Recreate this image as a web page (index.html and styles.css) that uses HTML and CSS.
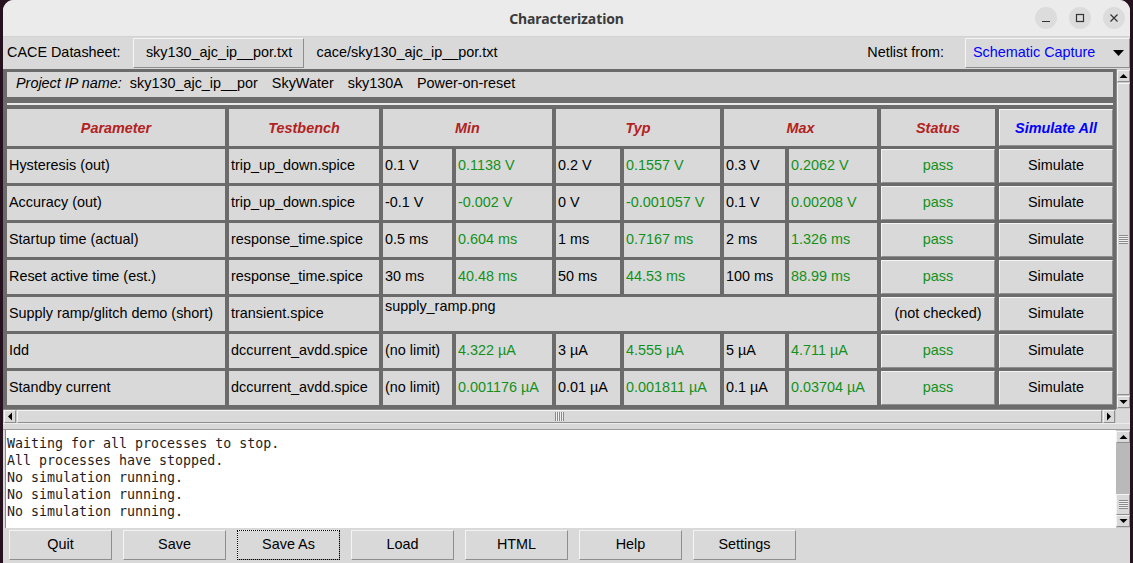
FILE: index.html
```html
<!DOCTYPE html>
<html>
<head>
<meta charset="utf-8">
<title>Characterization</title>
<link rel="stylesheet" href="styles.css">
</head>
<body>
<div class="window">
  <header class="titlebar">
    <div></div>
    <div class="title">Characterization</div>
    <div class="controls">
      <span class="wbtn"><svg width="22" height="22" viewBox="0 0 22 22"><line x1="7" y1="14.5" x2="15" y2="14.5" stroke="#333" stroke-width="1.2"/></svg></span>
      <span class="wbtn"><svg width="22" height="22" viewBox="0 0 22 22"><rect x="7.5" y="7.5" width="7" height="7" fill="none" stroke="#333" stroke-width="1.2"/></svg></span>
      <span class="wbtn"><svg width="22" height="22" viewBox="0 0 22 22"><path d="M7.5 7.5 L14.5 14.5 M14.5 7.5 L7.5 14.5" stroke="#333" stroke-width="1.2"/></svg></span>
    </div>
  </header>

  <div class="toolbar">
    <span class="lbl">CACE Datasheet:</span>
    <span class="tkbtn dsbtn">sky130_ajc_ip__por.txt</span>
    <span class="path">cace/sky130_ajc_ip__por.txt</span>
    <span class="netlbl">Netlist from:</span>
    <span class="tkbtn menubtn"><span class="blue">Schematic Capture</span><svg width="11" height="7" viewBox="0 0 11 7"><polygon points="0,0 11,0 5.5,6" fill="#000"/></svg></span>
  </div>

  <div class="viewport">
    <div class="canvas">
      <div class="project">
        <span class="pname">Project IP name:</span>
        <span class="p1">sky130_ajc_ip__por</span>
        <span class="p2">SkyWater</span>
        <span class="p2">sky130A</span>
        <span class="p2">Power-on-reset</span>
      </div>
      <div class="sep"></div>
      <div class="grid">
        <div class="c h">Parameter</div>
        <div class="c h">Testbench</div>
        <div class="c h span2">Min</div>
        <div class="c h span2">Typ</div>
        <div class="c h span2">Max</div>
        <div class="c h">Status</div>
        <div class="c b hb">Simulate All</div>

        <div class="c">Hysteresis (out)</div>
        <div class="c">trip_up_down.spice</div>
        <div class="c">0.1 V</div><div class="c g">0.1138 V</div>
        <div class="c">0.2 V</div><div class="c g">0.1557 V</div>
        <div class="c">0.3 V</div><div class="c g">0.2062 V</div>
        <div class="c b g">pass</div><div class="c b">Simulate</div>

        <div class="c">Accuracy (out)</div>
        <div class="c">trip_up_down.spice</div>
        <div class="c">-0.1 V</div><div class="c g">-0.002 V</div>
        <div class="c">0 V</div><div class="c g">-0.001057 V</div>
        <div class="c">0.1 V</div><div class="c g">0.00208 V</div>
        <div class="c b g">pass</div><div class="c b">Simulate</div>

        <div class="c">Startup time (actual)</div>
        <div class="c">response_time.spice</div>
        <div class="c">0.5 ms</div><div class="c g">0.604 ms</div>
        <div class="c">1 ms</div><div class="c g">0.7167 ms</div>
        <div class="c">2 ms</div><div class="c g">1.326 ms</div>
        <div class="c b g">pass</div><div class="c b">Simulate</div>

        <div class="c">Reset active time (est.)</div>
        <div class="c">response_time.spice</div>
        <div class="c">30 ms</div><div class="c g">40.48 ms</div>
        <div class="c">50 ms</div><div class="c g">44.53 ms</div>
        <div class="c">100 ms</div><div class="c g">88.99 ms</div>
        <div class="c b g">pass</div><div class="c b">Simulate</div>

        <div class="c">Supply ramp/glitch demo (short)</div>
        <div class="c">transient.spice</div>
        <div class="c span6 top">supply_ramp.png</div>
        <div class="c b">(not checked)</div><div class="c b">Simulate</div>

        <div class="c">Idd</div>
        <div class="c">dccurrent_avdd.spice</div>
        <div class="c">(no limit)</div><div class="c g">4.322 µA</div>
        <div class="c">3 µA</div><div class="c g">4.555 µA</div>
        <div class="c">5 µA</div><div class="c g">4.711 µA</div>
        <div class="c b g">pass</div><div class="c b">Simulate</div>

        <div class="c">Standby current</div>
        <div class="c">dccurrent_avdd.spice</div>
        <div class="c">(no limit)</div><div class="c g">0.001176 µA</div>
        <div class="c">0.01 µA</div><div class="c g">0.001811 µA</div>
        <div class="c">0.1 µA</div><div class="c g">0.03704 µA</div>
        <div class="c b g">pass</div><div class="c b">Simulate</div>
      </div>
    </div>

    <div class="vscroll">
      <span class="arrow"><svg width="9" height="6" viewBox="0 0 9 6"><polygon points="0.5,5 8.5,5 4.5,1" fill="#000"/></svg></span>
      <span class="thumb vthumb"><span class="grip-h"></span></span>
      <span class="arrow"><svg width="9" height="6" viewBox="0 0 9 6"><polygon points="0.5,1 8.5,1 4.5,5" fill="#000"/></svg></span>
    </div>

    <div class="hscroll">
      <span class="harrow"><svg width="6" height="9" viewBox="0 0 6 9"><polygon points="5,0.5 5,8.5 1,4.5" fill="#000"/></svg></span>
      <span class="thumb hthumb"><span class="grip-v"></span></span>
      <span class="harrow"><svg width="6" height="9" viewBox="0 0 6 9"><polygon points="1,0.5 1,8.5 5,4.5" fill="#000"/></svg></span>
    </div>
    <div class="corner"></div>
  </div>

  <div class="sash"></div>

  <div class="console">
    <div class="text">Waiting for all processes to stop.
All processes have stopped.
No simulation running.
No simulation running.
No simulation running.</div>
    <div class="cscroll">
      <span class="arrow"><svg width="9" height="6" viewBox="0 0 9 6"><polygon points="0.5,5 8.5,5 4.5,1" fill="#000"/></svg></span>
      <span class="ctrough"></span>
      <span class="thumb cthumb"><span class="grip-h"></span></span>
      <span class="arrow"><svg width="9" height="6" viewBox="0 0 9 6"><polygon points="0.5,1 8.5,1 4.5,5" fill="#000"/></svg></span>
    </div>
  </div>

  <div class="buttons">
    <span class="tkbtn bbtn">Quit</span>
    <span class="tkbtn bbtn">Save</span>
    <span class="tkbtn bbtn focus">Save As</span>
    <span class="tkbtn bbtn">Load</span>
    <span class="tkbtn bbtn">HTML</span>
    <span class="tkbtn bbtn">Help</span>
    <span class="tkbtn bbtn">Settings</span>
  </div>
</div>
</body>
</html>
```

FILE: styles.css
```css
* { box-sizing: border-box; }
html, body { margin: 0; padding: 0; }
body {
  width: 1133px;
  height: 563px;
  overflow: hidden;
  background: #26121f;
  font-family: "Liberation Sans", Arial, sans-serif;
  font-size: 14.4px;
  color: #000;
}
.window {
  margin-left: 3px;
  width: 1127px;
  height: 563px;
  background: #d9d9d9;
  border-radius: 11px 11px 0 0;
  overflow: hidden;
  display: flex;
  flex-direction: column;
}

/* title bar */
.titlebar {
  flex: none;
  height: 37px;
  background: #ebebeb;
  border-bottom: 1px solid #d2d2d2;
  display: grid;
  grid-template-columns: 1fr auto 1fr;
  align-items: center;
}
.title {
  font-family: "Noto Sans", "DejaVu Sans", sans-serif;
  font-weight: 700;
  font-size: 14px;
  color: #3b3b3b;
  letter-spacing: -0.1px;
}
.controls {
  justify-self: end;
  display: flex;
  gap: 12px;
  padding-right: 5px;
}
.wbtn {
  width: 22px;
  height: 22px;
  border-radius: 50%;
  background: #dcdcdc;
  display: block;
}
.wbtn svg { display: block; }

/* toolbar */
.toolbar {
  flex: none;
  height: 32px;
  display: flex;
  align-items: center;
  padding-left: 4px;
  white-space: nowrap;
}
.lbl, .path, .netlbl { margin-bottom: 2px; }
.tkbtn {
  display: flex;
  align-items: center;
  justify-content: center;
  background: #d9d9d9;
  border: 1px solid;
  border-color: #f4f4f4 #8e8e8e #8e8e8e #f4f4f4;
  padding-bottom: 2px;
}
.dsbtn {
  margin-left: 12px;
  width: 171px;
  height: 30px;
  padding-left: 2px;
}
.path { margin-left: 13px; }
.netlbl { margin-left: auto; margin-right: 21px; }
.menubtn {
  width: 165px;
  height: 30px;
  justify-content: space-between;
  padding: 0 5px 2px 7px;
}
.menubtn svg { display: block; margin-top: 2px; }
.blue { color: #0000ff; }

/* main scrolled canvas */
.viewport {
  flex: none;
  display: grid;
  grid-template-columns: 1113px 14px;
  grid-template-rows: 340px 14px;
}
.canvas {
  background: #6b6b6b;
  padding: 3px 3px 0 4px;
  overflow: hidden;
}
.project {
  height: 25px;
  background: #d9d9d9;
  display: flex;
  align-items: center;
  padding-bottom: 4px;
  white-space: nowrap;
}
.pname { font-style: italic; margin-left: 9px; }
.p1 { margin-left: 8px; }
.p2 { margin-left: 14px; }
.sep {
  height: 2px;
  margin: 6px 0 4px;
  background: #e9e9e9;
}
.grid {
  display: grid;
  grid-template-columns: 218px 150px 69px 96px 64px 96px 61px 88px 114px 114px;
  grid-template-rows: 37px repeat(7, 34px);
  column-gap: 4px;
  row-gap: 3px;
}
.c {
  background: #d9d9d9;
  display: flex;
  align-items: center;
  padding-left: 2px;
  padding-bottom: 2px;
  white-space: nowrap;
  overflow: hidden;
}
.h {
  justify-content: center;
  padding-left: 0;
  padding-bottom: 0;
  font-weight: 700;
  font-style: italic;
  color: #b22222;
}
.span2 { grid-column: span 2; }
.span6 { grid-column: span 6; }
.top { align-items: flex-start; padding-top: 1px; }
.g { color: #12911a; }
.b {
  justify-content: center;
  padding-left: 0;
  border: 1px solid;
  border-color: #f4f4f4 #8e8e8e #8e8e8e #f4f4f4;
}
.hb {
  font-weight: 700;
  font-style: italic;
  color: #0000ff;
  padding-bottom: 0;
}

/* scrollbars */
.vscroll, .cscroll {
  display: flex;
  flex-direction: column;
  background: #c9c9c9;
  border-left: 1px solid #8a8a8a;
  padding: 1px 0 1px 0;
}
.arrow {
  flex: none;
  height: 12px;
  display: flex;
  align-items: center;
  justify-content: center;
  background: #d9d9d9;
  border: 1px solid;
  border-color: #f4f4f4 #8e8e8e #8e8e8e #f4f4f4;
}
.arrow svg, .harrow svg { display: block; }
.thumb {
  background: #d9d9d9;
  border: 1px solid;
  border-color: #f4f4f4 #8e8e8e #8e8e8e #f4f4f4;
  display: flex;
  align-items: center;
  justify-content: center;
}
.vthumb { flex: 1; margin: 1px 0; }
.grip-h {
  width: 9px;
  height: 9px;
  background: repeating-linear-gradient(to bottom, #8a8a8a 0 1px, #f0f0f0 1px 2px);
}
.hscroll {
  display: flex;
  background: #c9c9c9;
  border-top: 1px solid #8a8a8a;
  padding: 0 1px;
}
.harrow {
  flex: none;
  width: 12px;
  display: flex;
  align-items: center;
  justify-content: center;
  background: #d9d9d9;
  border: 1px solid;
  border-color: #f4f4f4 #8e8e8e #8e8e8e #f4f4f4;
}
.hthumb { flex: 1; margin: 0 1px; }
.grip-v {
  width: 9px;
  height: 9px;
  background: repeating-linear-gradient(to right, #8a8a8a 0 1px, #f0f0f0 1px 2px);
}
.corner { background: #d9d9d9; }

.sash {
  flex: none;
  height: 7px;
  border-top: 1px solid #ececec;
  border-bottom: 1px solid #9c9c9c;
}

/* console */
.console {
  flex: none;
  height: 98px;
  display: grid;
  grid-template-columns: 1113px 14px;
}
.text {
  margin-left: 2px;
  background: #ffffff;
  border-left: 1px solid #8a8a8a;
  padding: 5px 0 0 1px;
  font-family: "DejaVu Sans Mono", monospace;
  font-size: 13.3px;
  line-height: 17px;
  white-space: pre;
  color: #1d1d1d;
  overflow: hidden;
}
.cscroll { border-left: none; }
.ctrough { flex: 1; background: #b9b9b9; }
.cthumb { flex: none; height: 21px; }

/* bottom buttons */
.buttons {
  flex: 1;
  display: flex;
  align-items: flex-start;
  gap: 11px;
  padding: 2px 0 0 6px;
}
.bbtn {
  width: 103px;
  height: 30px;
}
.focus {
  outline: 1px dotted #000;
  outline-offset: -1px;
}
```
